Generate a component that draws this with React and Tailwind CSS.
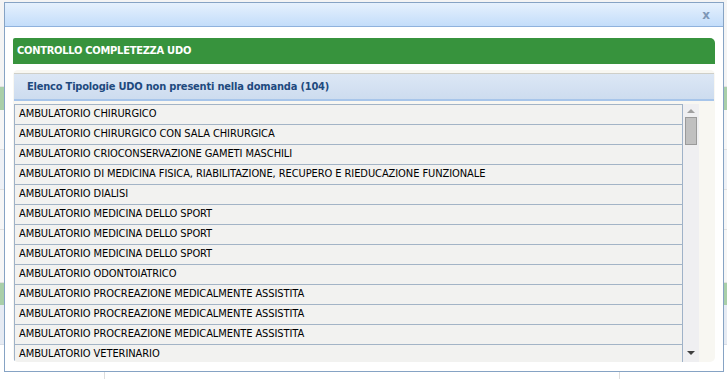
import React from "react";

const rows = [
  "AMBULATORIO CHIRURGICO",
  "AMBULATORIO CHIRURGICO CON SALA CHIRURGICA",
  "AMBULATORIO CRIOCONSERVAZIONE GAMETI MASCHILI",
  "AMBULATORIO DI MEDICINA FISICA, RIABILITAZIONE, RECUPERO E RIEDUCAZIONE FUNZIONALE",
  "AMBULATORIO DIALISI",
  "AMBULATORIO MEDICINA DELLO SPORT",
  "AMBULATORIO MEDICINA DELLO SPORT",
  "AMBULATORIO MEDICINA DELLO SPORT",
  "AMBULATORIO ODONTOIATRICO",
  "AMBULATORIO PROCREAZIONE MEDICALMENTE ASSISTITA",
  "AMBULATORIO PROCREAZIONE MEDICALMENTE ASSISTITA",
  "AMBULATORIO PROCREAZIONE MEDICALMENTE ASSISTITA",
  "AMBULATORIO VETERINARIO",
];

export default function App() {
  return (
    <div
      className="relative w-[727px] h-[379px] overflow-hidden bg-[#f4f4f4]"
      style={{ fontFamily: '"DejaVu Sans Condensed", "DejaVu Sans", sans-serif' }}
    >
      {/* background page */}
      <div className="flex flex-col w-full h-full bg-[#f6f6f6]">
        <div className="h-[87px] shrink-0 bg-[#f4f4f4] border-b border-[#e2e2e2]"></div>
        <div className="h-[23px] shrink-0 bg-[#a9cfa9]"></div>
        <div className="h-[40px] shrink-0 border-b border-[#e0e0e0]"></div>
        <div className="h-[40px] shrink-0 border-b border-[#e0e0e0] bg-[#eef1f6]"></div>
        <div className="h-[40px] shrink-0 border-b border-[#e0e0e0]"></div>
        <div className="h-[53px] shrink-0 border-b border-[#e0e0e0]"></div>
        <div className="h-[22px] shrink-0 bg-[#a9cfa9]"></div>
        <div className="h-[40px] shrink-0 bg-[#e6ebf3] border-b border-[#d8dde6]"></div>
        <div className="flex flex-1 bg-white">
          <div className="w-[105px] border-r border-[#ddd]"></div>
          <div className="w-[515px] border-r border-[#ddd]"></div>
        </div>
      </div>

      {/* dialog */}
      <div className="absolute left-[4px] top-[2px] w-[720px] h-[370px] border border-[#86a3c4] bg-white flex flex-col">
        <div className="h-[24px] shrink-0 bg-gradient-to-b from-[#e6f1fd] to-[#c3ddfa] border-b border-[#8fb2dd] flex items-center justify-end pr-[13px]">
          <span className="text-[12px] font-bold text-[#7e97b6] leading-none" style={{ fontFamily: '"DejaVu Sans", sans-serif' }}>x</span>
        </div>
        <div className="flex-1 px-[8px] pt-[11px] flex flex-col overflow-hidden">
          <div className="h-[26px] shrink-0 bg-[#37933d] rounded-tr-[5px] rounded-tl-[2px] flex items-center pl-[4px]">
            <span className="text-white font-bold text-[11px] tracking-[-0.25px]">CONTROLLO COMPLETEZZA UDO</span>
          </div>
          <div className="mt-[6px] h-[292px] shrink-0 bg-[#f8f7f2] rounded-[5px] px-[1px] pt-[3px] flex flex-col overflow-hidden">
            <div className="h-[28px] shrink-0 border-t border-[#cfcfc8] bg-gradient-to-b from-[#dce7f5] to-[#cddcef] border-b-2 border-b-[#a7c5ea] flex items-center pl-[13px] pt-[2px]">
              <span className="text-[11px] font-bold text-[#1e4a7e] tracking-[-0.2px]">Elenco Tipologie UDO non presenti nella domanda (104)</span>
            </div>
            <div className="flex mt-[3px] flex-1 overflow-hidden">
              <div className="w-[669px] border-l border-r border-[#9fb2c8] bg-[#f2f2f0] overflow-hidden">
                {rows.map((r, i) => (
                  <div key={i} className="h-[20px] border-t border-[#a3b4c6] flex items-center pl-[4px] text-[11px] text-black whitespace-nowrap tracking-[-0.08px]">
                    {r}
                  </div>
                ))}
              </div>
              <div className="w-[16px] bg-[#efeff1] flex flex-col items-center pt-[5px] relative">
                <div className="w-0 h-0 border-l-[4px] border-r-[4px] border-b-[4px] border-l-transparent border-r-transparent border-b-[#a0a0a0]"></div>
                <div className="mt-[4px] w-[12px] h-[28px] bg-[#c0c0c0] border border-[#9a9a9a]"></div>
                <div className="absolute bottom-[7px] w-0 h-0 border-l-[4px] border-r-[4px] border-t-[4px] border-l-transparent border-r-transparent border-t-[#404040]"></div>
              </div>
            </div>
          </div>
        </div>
      </div>
    </div>
  );
}
